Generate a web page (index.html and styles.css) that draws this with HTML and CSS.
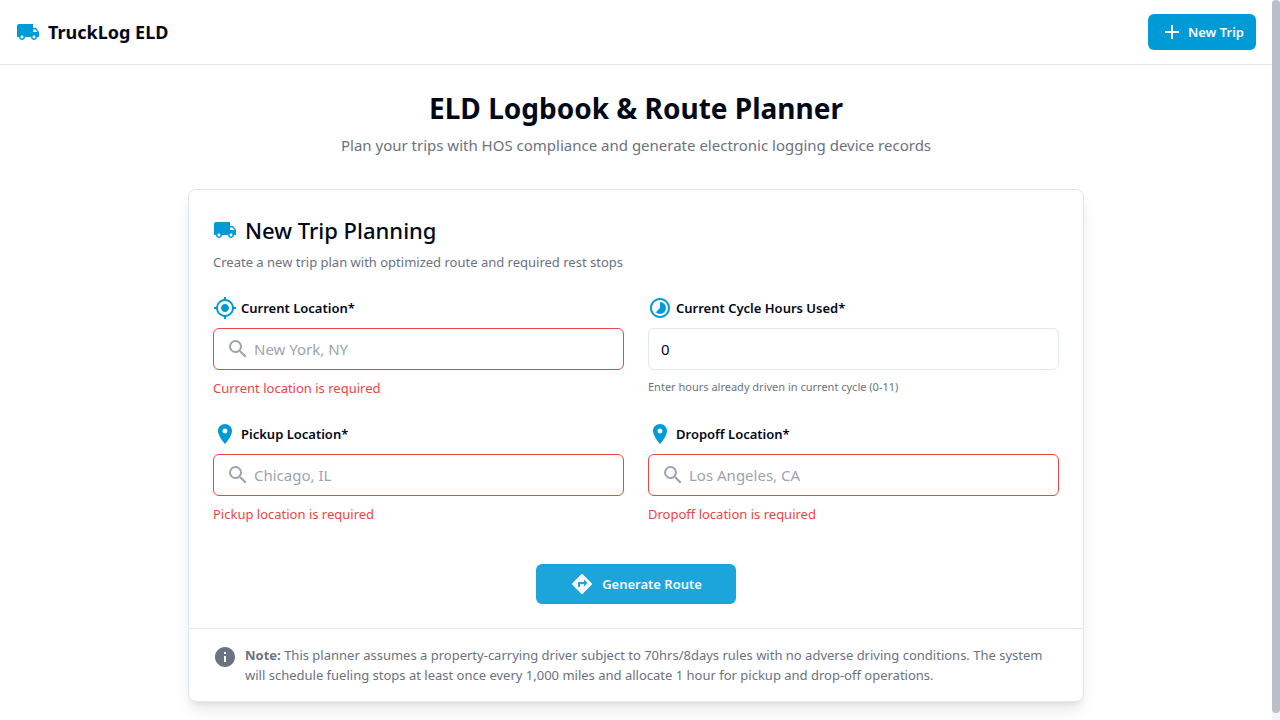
FILE: index.html
```html
<!DOCTYPE html>
<html lang="en">
<head>
<meta charset="utf-8">
<meta name="viewport" content="width=device-width, initial-scale=1">
<title>TruckLog ELD</title>
<link rel="stylesheet" href="styles.css">
</head>
<body>
<svg class="sprite" aria-hidden="true">
  <symbol id="truck" viewBox="0 0 24 24"><path d="M20 8h-3V4H3c-1.100 0-2 .9-2 2v11h2c0 1.660 1.340 3 3 3s3-1.340 3-3h6c0 1.660 1.340 3 3 3s3-1.340 3-3h2v-5l-3-4zM6 18.500c-.83 0-1.500-.67-1.500-1.500s.67-1.500 1.500-1.500 1.500.67 1.500 1.500-.67 1.500-1.500 1.500zm13.500-9l1.960 2.500H17V9.500h2.500zm-1.500 9c-.83 0-1.500-.67-1.500-1.500s.67-1.500 1.500-1.500 1.500.67 1.500 1.500-.67 1.500-1.500 1.500z"/></symbol>
  <symbol id="plus" viewBox="0 0 24 24"><path d="M19 13h-6v6h-2v-6H5v-2h6V5h2v6h6v2z"/></symbol>
  <symbol id="target" viewBox="0 0 24 24"><path d="M12 8c-2.210 0-4 1.790-4 4s1.790 4 4 4 4-1.790 4-4-1.790-4-4-4zm8.940 3A8.994 8.994 0 0 0 13 3.060V1h-2v2.060A8.994 8.994 0 0 0 3.060 11H1v2h2.060A8.994 8.994 0 0 0 11 20.940V23h2v-2.060A8.994 8.994 0 0 0 20.940 13H23v-2h-2.060zM12 19c-3.870 0-7-3.130-7-7s3.130-7 7-7 7 3.130 7 7-3.130 7-7 7z"/></symbol>
  <symbol id="cycle" viewBox="0 0 24 24"><path d="M16.240 7.760A5.974 5.974 0 0 0 12 6v6l-4.240 4.240a5.990 5.990 0 0 0 8.480 0 5.990 5.990 0 0 0 0-8.480zM12 2C6.480 2 2 6.480 2 12s4.480 10 10 10 10-4.480 10-10S17.520 2 12 2zm0 18c-4.420 0-8-3.580-8-8s3.580-8 8-8 8 3.580 8 8-3.580 8-8 8z"/></symbol>
  <symbol id="pin" viewBox="0 0 24 24"><path d="M12 2C8.130 2 5 5.130 5 9c0 5.250 7 13 7 13s7-7.750 7-13c0-3.870-3.130-7-7-7zm0 9.500a2.500 2.500 0 0 1 0-5 2.500 2.500 0 0 1 0 5z"/></symbol>
  <symbol id="search" viewBox="0 0 24 24"><path d="M15.500 14h-.79l-.28-.27A6.471 6.471 0 0 0 16 9.500 6.500 6.500 0 1 0 9.500 16c1.610 0 3.090-.59 4.230-1.570l.27.28v.79l5 4.990L20.490 19l-4.990-5zm-6 0C7.010 14 5 11.990 5 9.500S7.010 5 9.500 5 14 7.010 14 9.500 11.990 14 9.500 14z"/></symbol>
  <symbol id="route" viewBox="0 0 24 24"><path d="M21.710 11.290l-9-9a.996.996 0 0 0-1.410 0l-9 9a.996.996 0 0 0 0 1.410l9 9c.39.39 1.020.39 1.410 0l9-9a.996.996 0 0 0 0-1.410zM14 14.500V12h-4v3H8v-4c0-.55.45-1 1-1h5V7.500l3.500 3.500-3.500 3.500z"/></symbol>
  <symbol id="info" viewBox="0 0 24 24"><path d="M12 2C6.480 2 2 6.480 2 12s4.480 10 10 10 10-4.480 10-10S17.520 2 12 2zm1 15h-2v-6h2v6zm0-8h-2V7h2v2z"/></symbol>
</svg>
<div class="page">
  <div class="content">
    <header class="topbar">
      <div class="brand"><svg class="icon accent"><use href="#truck"/></svg><span>TruckLog ELD</span></div>
      <button class="btn btn-new" type="button"><svg class="icon"><use href="#plus"/></svg>New Trip</button>
    </header>
    <main class="main">
      <div class="hero">
        <h1>ELD Logbook &amp; Route Planner</h1>
        <p>Plan your trips with HOS compliance and generate electronic logging device records</p>
      </div>
      <section class="card">
        <div class="card-head">
          <h2><svg class="icon accent"><use href="#truck"/></svg>New Trip Planning</h2>
          <p>Create a new trip plan with optimized route and required rest stops</p>
        </div>
        <form class="form" novalidate>
          <div class="fields">
            <div class="field">
              <label for="current"><svg class="icon accent"><use href="#target"/></svg>Current Location*</label>
              <div class="control invalid"><svg class="icon search"><use href="#search"/></svg><input id="current" type="text" placeholder="New York, NY"></div>
              <p class="error">Current location is required</p>
            </div>
            <div class="field">
              <label for="hours"><svg class="icon accent"><use href="#cycle"/></svg>Current Cycle Hours Used*</label>
              <div class="control"><input id="hours" type="number" min="0" max="11" value="0"></div>
              <p class="hint">Enter hours already driven in current cycle (0-11)</p>
            </div>
            <div class="field">
              <label for="pickup"><svg class="icon accent"><use href="#pin"/></svg>Pickup Location*</label>
              <div class="control invalid"><svg class="icon search"><use href="#search"/></svg><input id="pickup" type="text" placeholder="Chicago, IL"></div>
              <p class="error">Pickup location is required</p>
            </div>
            <div class="field">
              <label for="dropoff"><svg class="icon accent"><use href="#pin"/></svg>Dropoff Location*</label>
              <div class="control invalid"><svg class="icon search"><use href="#search"/></svg><input id="dropoff" type="text" placeholder="Los Angeles, CA"></div>
              <p class="error">Dropoff location is required</p>
            </div>
          </div>
          <button class="btn btn-generate" type="button"><svg class="icon"><use href="#route"/></svg>Generate Route</button>
        </form>
        <div class="note">
          <svg class="icon"><use href="#info"/></svg>
          <p><strong>Note:</strong> This planner assumes a property-carrying driver subject to 70hrs/8days rules with no adverse driving conditions. The system will schedule fueling stops at least once every 1,000 miles and allocate 1 hour for pickup and drop-off operations.</p>
        </div>
      </section>
    </main>
  </div>
  <div class="rail" aria-hidden="true"><div class="thumb"></div></div>
</div>
</body>
</html>
```
FILE: styles.css
```css
* { box-sizing: border-box; margin: 0; }

html { scrollbar-width: none; }

body {
  font-family: "Noto Sans", "Open Sans", sans-serif;
  font-size: 15px;
  line-height: 24px;
  color: #020817;
  background: #fff;
}

.page { display: flex; align-items: flex-start; }
.content { flex: 1; min-width: 0; }
.rail { position: sticky; top: 0; flex: none; width: 8px; height: 100vh; background: #f3f4f6; }
.thumb { height: 99%; border-radius: 4px; background: #bbbec9; }

.sprite { position: absolute; width: 0; height: 0; }
.icon { flex: none; width: 24px; height: 24px; fill: currentColor; }
.accent { color: #009bd6; }

.topbar {
  display: flex;
  align-items: center;
  justify-content: space-between;
  height: 65px;
  padding: 0 16px;
  border-bottom: 1px solid #e2e8f0;
}
.brand { display: flex; align-items: center; gap: 8px; font-size: 18px; font-weight: 700; }

.btn {
  display: flex;
  align-items: center;
  justify-content: center;
  gap: 8px;
  border: 0;
  border-radius: 6px;
  background: #009bd6;
  color: #f8fafc;
  font: 600 13px/20px "Noto Sans", "Open Sans", sans-serif;
}
.btn-new { height: 36px; padding: 0 12px; gap: 4px; }
.btn-generate { width: 200px; height: 40px; margin: 40px auto 0; background: #1ca5db; }

.main { max-width: 928px; margin: 0 auto; padding: 24px 16px; }
.hero { display: grid; gap: 6px; margin-bottom: 32px; text-align: center; }
.hero h1 { font-size: 28px; line-height: 38px; font-weight: 700; }
.hero p { color: #6b7280; }

.card {
  border: 1px solid #e2e8f0;
  border-radius: 8px;
  background: #fff;
  box-shadow: 0 10px 15px -3px rgba(0, 0, 0, .1), 0 4px 6px -4px rgba(0, 0, 0, .1);
}
.card-head { display: grid; gap: 6px; padding: 24px; }
.card-head h2 { display: flex; align-items: center; gap: 8px; font-size: 22px; line-height: 32px; font-weight: 500; }
.card-head p { font-size: 13px; line-height: 20px; color: #6b7280; }

.form { padding: 0 24px 24px; }
.fields { display: grid; grid-template-columns: 1fr 1fr; gap: 24px; }
.field { display: flex; flex-direction: column; gap: 8px; min-width: 0; }
.field label { display: flex; align-items: center; gap: 4px; font-size: 13px; font-weight: 600; }
.control { display: flex; align-items: center; gap: 4px; height: 42px; padding: 0 12px; border: 1px solid #e2e8f0; border-radius: 6px; }
.invalid { border-color: #ef4444; }
.control input { flex: 1; min-width: 0; padding: 0; border: 0; outline: 0; background: none; color: inherit; font: inherit; appearance: textfield; }
.control input::placeholder { color: #9ca3af; }
.search { color: #9ca3af; }
.error { font-size: 13px; line-height: 20px; color: #ef4444; }
.hint { font-size: 11px; line-height: 18px; color: #6b7280; }

.note { display: flex; gap: 8px; padding: 16px 24px; border-top: 1px solid #e2e8f0; color: #6b7280; font-size: 13px; line-height: 20px; }

@media (max-width: 640px) {
  .fields { grid-template-columns: 1fr; }
}
```
